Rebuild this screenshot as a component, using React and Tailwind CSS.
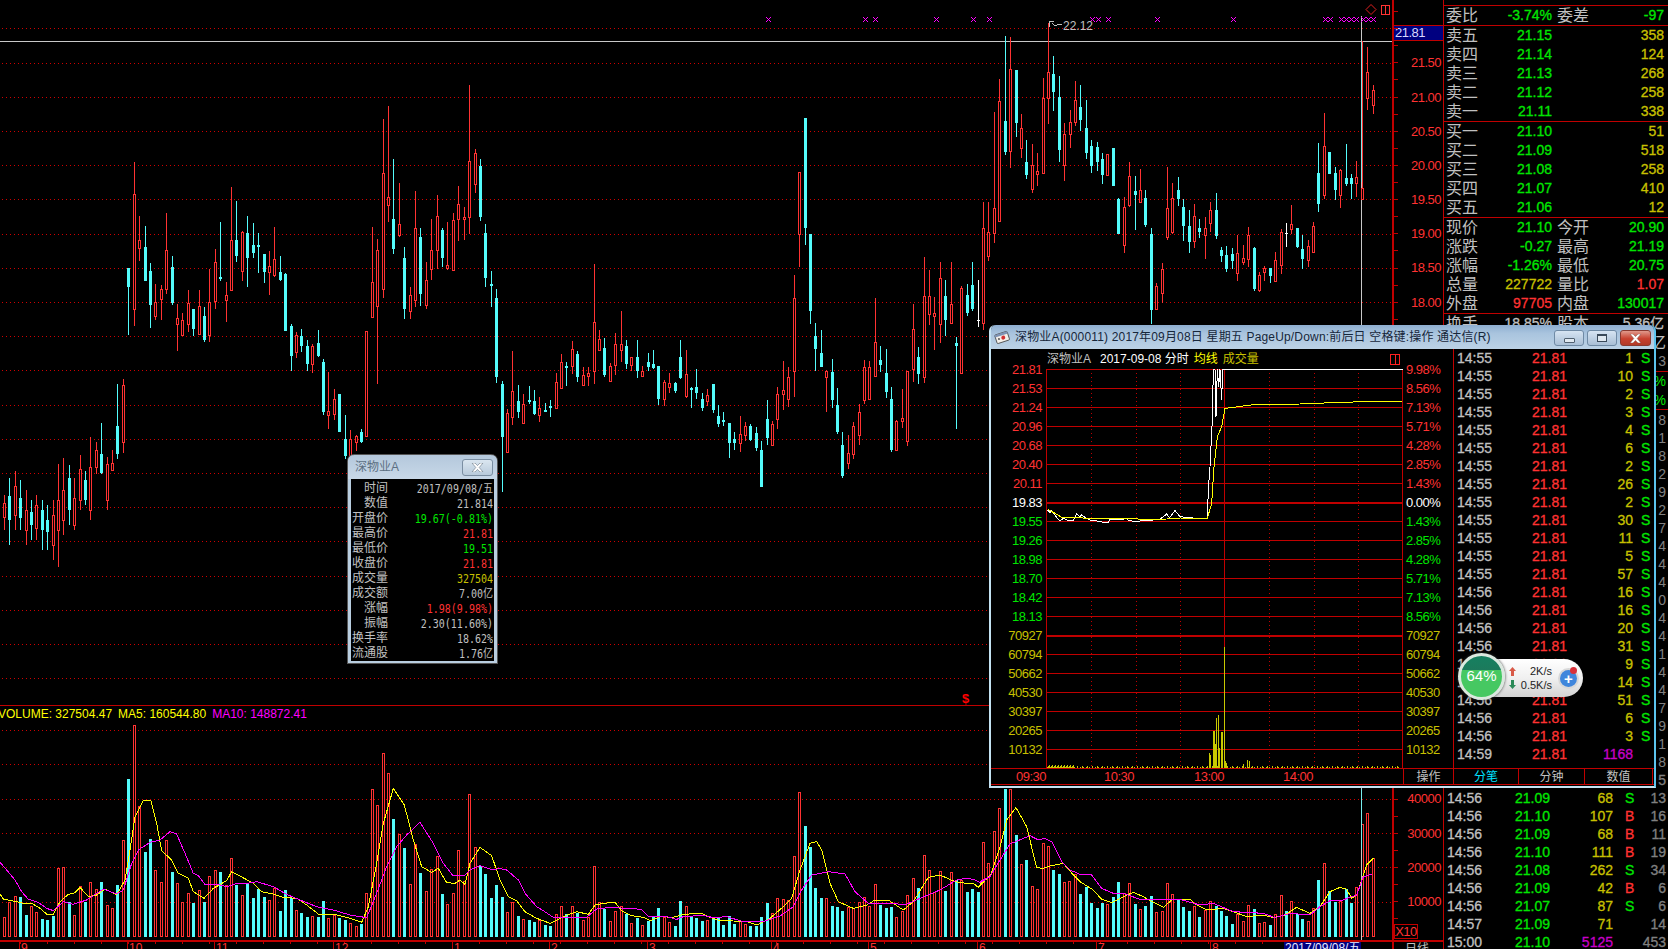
import React from "react";

const RED = "#ff3232", CY = "#54fcfc";

const parseC = (s, x0, y0) =>
  s.trim().split(";").filter((r) => r.trim()).map((r) => {
    const [x, t, a, b, c, d] = r.trim().split(/\s+/);
    const Y = (v) => Math.round(+v / 3 + y0);
    return { x: Math.floor(+x / 3 + x0), t, hi: Y(a), top: Y(b), bot: Y(c), lo: Y(d) };
  });

const leftHand = parseC(`
12 r 1305 1329 1371 1410;27 c 1254 1308 1380 1455;46 r 1233 1278 1365 1410;60 c 1260 1314 1374 1410;78 r 1290 1350 1410 1455;93 c 1320 1356 1395 1440;108 r 1305 1335 1404 1440;126 c 1320 1350 1410 1470;141 c 1335 1380 1416 1470;159 r 1320 1365 1455 1500;175 r 1212 1320 1410 1521;190 r 1194 1290 1380 1425;207 c 1215 1254 1350 1395;222 r 1254 1314 1395 1410;241 r 1185 1228 1320 1350;256 c 1233 1260 1320 1335;271 r 1132 1222 1350 1380;289 r 1146 1170 1220 1242;304 c 1090 1182 1240 1242;322 r 1192 1212 1320 1350;337 r 1170 1210 1230 1233;352 c 972 1098 1182 1196;370 r 958 976 1145 1178`, 0, 60);

const segA = parseC(`
385 c 625 625 680 825;403 r 307 403 748 797;418 r 468 541 563 602;436 c 498 562 662 662;451 c 610 634 735 803;466 r 672 725 767 780;484 r 675 688 716 780;499 r 460 571 688 702;517 c 588 622 728 735;532 r 732 775 793 873;547 r 760 781 826 826;565 r 690 730 793 816;580 c 748 748 806 828;598 r 690 739 823 823;613 c 742 769 840 846;628 r 628 727 826 846;646 r 568 607 724 747;661 c 487 652 657 662;679 r 667 706 721 786;694 r 381 541 691 691;709 c 424 541 587 606;727 r 514 517 634 663;742 c 468 519 594 681;760 c 490 556 578 594;775 c 520 556 561 639;793 c 583 583 636 669;808 r 574 619 637 705;823 r 502 598 644 651;841 c 588 637 660 663;856 c 640 642 812 812;874 c 793 798 887 933;889 r 817 826 877 893;904 c 808 828 857 876;922 c 840 858 911 933;937 r 853 858 913 938;955 c 811 850 888 891;970 c 897 907 1055 1064;985 r 936 1052 1066 1106;1003 r 988 1016 1063 1079;1018 c 1002 1002 1115 1115;1036 c 1066 1138 1188 1196;1051 r 1110 1138 1185 1195;1069 r 1126 1127 1147 1173;1084 c 1107 1117 1145 1148;1099 r 814 814 1127 1127;1117 r 502 667 771 773;1132 r 538 569 737 971;1150 r 178 340 688 714;1165 r 138 412 436 486;1180 c 298 478 566 582;1198 r 370 493 524 531;1213 c 562 595 746 777;1231 r 682 706 754 777;1246 r 394 505 721 741;1261 c 505 532 701 738;1279 r 607 661 736 747;1294 r 478 571 628 660;1312 r 406 469 571 628;1327 c 505 511 593 622;1342 r 487 616 623 630;1360 r 460 481 631 632;1375 r 379 433 478 543;1393 r 442 472 478 540;1408 r 75 304 472 522;1426 r 267 280 373 399;1441 c 298 319 472 483;1456 c 492 520 653 681;1474 c 634 673 675 741;1489 c 687 714 950 969`, 0, 60);

const segB = parseC(`
7 c 964 972 1130 1295;22 r 1048 1060 1177 1177;37 r 873 994 1072 1095;55 c 976 1023 1055 1074;70 r 1003 1033 1088 1091;88 c 978 1020 1023 1031;103 c 990 1023 1062 1065;118 r 1011 1045 1064 1086;136 c 1030 1050 1053 1055;151 c 1020 1038 1043 1071;169 r 940 967 1045 1047;184 r 882 907 983 986;199 c 906 918 921 978;217 r 843 868 917 941;232 c 874 882 950 966;250 r 922 946 974 977;265 r 922 940 949 978;283 r 612 787 934 972;298 r 810 838 870 873;313 c 835 864 944 951;331 r 910 919 964 966;346 r 820 853 914 944;364 r 753 853 871 906;379 c 840 858 911 927;394 r 892 892 914 932;412 c 840 891 932 954;427 r 918 934 949 951;445 c 880 906 920 933;460 c 870 912 924 927;475 c 918 918 1016 1035;493 r 960 966 1018 1037;508 r 938 970 980 999;526 c 965 968 992 999;541 c 840 891 954 957;559 r 870 943 1007 1014;574 c 980 984 988 1044;589 c 927 981 998 1017;607 c 999 1017 1044 1053;622 r 987 1006 1024 1039;640 c 972 972 1049 1059;655 c 1035 1068 1091 1101;670 c 1056 1079 1082 1098;688 c 1089 1089 1148 1194;703 c 1116 1137 1148 1170;721 r 1068 1123 1150 1175;736 r 1087 1099 1124 1143;751 c 1092 1098 1140 1143;769 c 1101 1120 1163 1173;784 c 1143 1171 1280 1280;802 c 1020 1078 1133 1155;817 r 1083 1093 1156 1157;832 r 981 1003 1078 1106;850 r 904 991 1001 1050;865 r 921 952 1016 1041;883 r 646 715 934 1011;898 r 337 337 521 621;916 c 174 174 503 555;931 c 522 522 752 792;946 c 790 828 866 933;964 c 811 880 920 920;979 r 930 933 952 1056;997 c 897 937 1019 1044;1012 c 984 1036 1116 1122;1027 c 1117 1156 1248 1254;1045 r 1125 1180 1210 1227;1060 r 1087 1099 1181 1197;1078 r 1032 1057 1124 1156;1093 r 900 922 1019 1032;1108 r 904 922 1016 1018;1126 r 714 847 947 950;1141 c 858 900 915 936;1159 c 867 940 995 1014;1174 c 981 1018 1170 1176;1189 r 1080 1083 1171 1172;1207 r 987 1075 1084 1104;1222 r 934 934 1144 1158;1240 r 732 808 926 966;1255 c 862 891 941 972;1273 r 591 709 952 969;1288 r 630 709 761 795;1303 r 711 760 769 870;1321 r 606 655 793 849;1336 c 660 709 780 828;1354 r 606 732 788 791;1369 c 832 850 857 1107;1384 r 678 685 940 940;1402 c 672 706 759 768;1417 c 606 676 747 753;1435 w 660 780 783 800`, 500, 60);

const segC = parseC(`
70 r 607 685 970 990;85 r 607 697 767 782;103 r 336 625 698 730;118 r 237 304 664 664;136 c 108 364 456 465;151 r 111 207 452 503;169 c 210 210 369 410;184 r 342 385 443 474;199 c 420 487 525 537;217 r 433 496 566 579;232 r 460 514 521 558;250 r 234 294 518 518;265 r 70 217 295 372;280 c 168 222 276 333;298 c 229 292 450 486;313 r 369 403 494 543;331 r 330 365 403 444;346 r 243 301 365 378;361 c 255 322 360 393;379 c 300 385 459 477;394 c 420 439 497 519;412 c 426 440 486 513;427 c 460 477 525 551;442 r 463 463 526 526;460 c 444 444 557 557;475 c 595 597 701 702;493 r 591 622 736 759;508 r 487 529 614 620;526 c 529 574 584 690;541 r 508 571 605 606;556 c 571 595 676 681;574 c 685 702 930 972;589 r 850 858 926 927;607 r 790 808 880 910;622 r 502 625 711 720;637 r 550 595 697 702;655 c 532 570 597 618;670 c 598 622 677 723;688 c 630 679 726 759;703 r 613 649 722 744;718 c 658 685 696 714;736 r 652 685 704 777;751 r 607 631 668 696;769 c 579 631 708 717;784 c 742 750 767 786;799 c 738 765 808 816;817 c 745 762 782 807;832 r 705 760 818 843;850 r 736 775 787 795;865 r 682 705 776 801;883 c 741 744 867 873;898 r 816 826 870 876;913 r 799 805 815 843;931 c 805 805 828 849;946 r 756 781 842 842;964 r 688 697 794 822;979 w 670 700 742 742;994 r 616 673 687 702;1012 c 684 685 742 744;1027 c 705 747 776 807;1045 r 721 739 779 801;1060 r 667 679 755 756;1075 c 430 520 612 636;1093 r 340 439 586 597;1108 c 457 457 522 522;1126 c 502 519 570 600;1141 r 508 511 585 624;1159 c 432 534 553 558;1174 c 522 534 552 597;1189 r 484 532 549 592;1207 r 124 565 597 597;1222 r 142 217 294 330;1240 r 255 271 315 342`, 960, 0);

const candles = [...leftHand, ...segA, ...segB, ...segC];

const parseV = (s, x0, y0) =>
  s.trim().split(/\s+/).map((v) => {
    const m = v.match(/(\d+)([rc])(\d+)/);
    return { x: Math.floor(+m[1] / 3 + x0), t: m[2], top: Math.round(+m[3] / 3 + y0) };
  });

const vols = [
  ...parseV(`13r682 28r636 46r618 61c621 79c675 94r648 109r666 127c687 142c690 160c678 175r535 190r532 208c636 223r675 241r588 256c636 271r576 289r597 304c576 322r645 337r654 352c585 370r450 385c267 403r105 418r348 436c486 451c447 466r540 484r576 499r450 517c546 532r579 547r636 565r609 580c639 598r600 613c636 628r558 646r540 661c546 679r585 694r504 709c585 727r615 742c582 760c624 775c597 793c621 808r630 823r594 841c663 856c600 874c624 889r660 904c669 922c681 937r678 955c681 970c633 985r684 1003r675 1018c684 1036c690 1051r699 1069r708 1084c702 1099r609 1117r297 1132r345 1150r189 1165r249 1180c387 1198r432 1213c474 1231r582 1246r462 1261c549 1279r603 1294r537 1312r498 1327c612 1342r642 1360r609 1375r480 1393r573 1408r312 1426r471 1441c528 1456c552 1474c624 1489c585`, 0, 690),
  ...parseV(`7c621 22r666 37r636 55c678 70r687 88c690 103c696 118r690 136c705 151c708 169r672 184r648 199c672 217r648 232c669 250r690 265r681 283r528 298r636 313c657 331r693 346r663 364r648 379c672 394r699 412c684 427r705 445c693 460c678 475c654 493r681 508r696 526c708 541c633 559r648 574c681 589c684 607c693 622r690 640c687 655c684 670c705 688c678 703c702 721r693 736r702 751c708 769c708 784c681 802c639 817r669 832r624 850r627 865r630 883r498 898r306 916c408 931c471 946c594 964c624 979r624 997c648 1012c651 1027c663 1045r651 1060r654 1078r636 1093r621 1108r648 1126r582 1141c645 1159c654 1174c651 1189r681 1207r663 1222r615 1240r564 1255c594 1273r495 1288r540 1303r606 1321r543 1336c603 1354r546 1369c570 1384r570 1402c606 1417c597 1435c606`, 500, 690),
  ...parseV(`10r667 25r730 43r634 58r565 76c507 91r507 109c645 124r733 139c720 157r799 172r808 190r670 205r679 220c749 238c763 253r787 268r784 286r763 301c822 319c802 334c850 352c864 367c850 382r853 400c832 415c787 433r820 448r790 466c852 481r867 496c858 514c828 529r876 547r874 562r790 577r823 595c841 610c861 628c873 643r858 658c891 676r871 691r844 709c858 724c873 739c888 757c912 772r882 790r903 805r856 823c867 838r909 853r906 871c915 886r882 904r826 919c873 934r844 952c882 967c897 985r903 1000r865 1015c780 1033r730 1048c813 1066c846 1081r843 1099c808 1114c849 1129r801 1147r612 1162r580 1180r715`, 980, 620),
];

const pts = (arr, x0, y0) => arr.map(([x, y]) => `${x / 3 + x0},${y / 3 + y0}`).join(" ");

const yl1 = [[0,612],[10,627],[40,633],[70,640],[95,640],[120,655],[140,672],[160,672],[180,635],[205,613],[225,608],[240,592],[265,620],[290,615],[315,597],[350,615],[375,570],[390,480],[405,380],[430,330],[452,330],[470,400],[485,482],[515,510],[535,550],[565,565],[580,605],[612,625],[640,595],[680,572],[695,545],[720,558],[760,580],[785,605],[820,612],[850,622],[890,625],[920,645],[955,672],[1000,672],[1050,685],[1085,697],[1105,650],[1130,520],[1150,400],[1180,295],[1213,345],[1240,450],[1265,530],[1295,547],[1315,535],[1340,578],[1365,580],[1380,570],[1395,583],[1410,520],[1440,472],[1475,497],[1500,570]];
const mg1 = [[0,517],[20,540],[45,570],[65,605],[85,628],[115,637],[140,655],[160,662],[190,635],[220,643],[260,630],[310,597],[350,612],[370,600],[395,520],[415,480],[450,457],[480,450],[510,425],[530,432],[555,490],[580,550],[595,557],[615,583],[650,583],[680,590],[710,580],[740,580],[770,575],[820,590],[860,613],[900,630],[950,650],[1000,660],[1050,675],[1100,683],[1130,610],[1160,530],[1190,470],[1220,435],[1260,397],[1300,460],[1330,520],[1360,558],[1395,555],[1410,540],[1440,527],[1480,540],[1500,535]];
const yl2 = [[0,570],[25,620],[50,632],[75,665],[110,685],[150,700],[170,690],[200,675],[230,665],[265,673],[285,645],[310,640],[345,637],[365,662],[395,677],[430,682],[450,692],[480,680],[520,682],[550,673],[605,670],[625,680],[660,692],[700,693],[740,695],[770,705],[810,685],[850,650],[875,625],[900,540],[930,460],[950,455],[965,480],[990,580],[1015,635],[1060,655],[1100,645],[1125,630],[1165,630],[1210,660],[1240,635],[1285,562],[1320,555],[1365,575],[1400,580],[1420,580],[1435,592],[1470,555]];
const mg2 = [[0,536],[20,540],[55,570],[75,610],[110,650],[130,662],[160,682],[260,682],[290,657],[330,652],[380,655],[425,658],[445,680],[500,680],[530,688],[550,680],[610,676],[640,683],[680,680],[730,695],[790,695],[840,678],[880,650],[905,600],[935,555],[985,545],[1035,552],[1065,605],[1105,640],[1180,640],[1215,645],[1260,625],[1320,600],[1370,570],[1395,565],[1420,568],[1440,578],[1470,560]];
const yl3 = [[0,790],[30,770],[60,680],[80,600],[108,563],[140,620],[170,743],[190,745],[210,738],[250,730],[280,765],[300,785],[340,810],[365,838],[395,848],[430,830],[460,817],[490,830],[510,842],[550,862],[575,840],[630,838],[650,855],[680,870],[730,865],[760,875],[800,890],[850,885],[880,893],[915,885],[950,862],[990,880],[1020,860],[1050,815],[1080,802],[1100,808],[1115,835],[1130,825],[1160,735],[1180,715]];
const mg3 = [[0,785],[30,770],[60,720],[90,672],[150,647],[175,660],[195,655],[215,665],[245,725],[270,750],[300,763],[335,765],[365,805],[400,820],[430,820],[480,838],[600,838],[660,855],[700,850],[760,875],[850,880],[885,893],[930,880],[990,885],[1020,860],[1050,842],[1080,843],[1130,825],[1150,770],[1175,763]];

const marks = [768, 865, 875, 936, 973, 989, 1092, 1098, 1108, 1157, 1233, 1325, 1330, 1341, 1346, 1351, 1356, 1363, 1368, 1373];

function PriceChart() {
  const ys = Array.from({ length: 20 }, (_, k) => Math.round(28.3 + 34.2 * k));
  return (
    <svg width="1392" height="705" className="block shrink-0" shapeRendering="crispEdges">
      {ys.map((y) => <line key={y} x1="2" x2="1392" y1={y + 0.5} y2={y + 0.5} stroke="#d00000" strokeDasharray="1 3" />)}
      <rect x="0" y="41" width="1392" height="1" fill="#c8c8c8" />
      <rect x="1361" y="16" width="1" height="689" fill="#c8c8c8" />
      {candles.map((c, i) => {
        const col = c.t === "r" ? RED : c.t === "c" ? CY : "#ffffff";
        return (
          <g key={i}>
            <rect x={c.x} y={c.hi} width="1" height={Math.max(1, c.lo - c.hi)} fill={col} />
            {c.t === "c" && <rect x={c.x - 1} y={c.top} width="3" height={Math.max(2, c.bot - c.top)} fill={col} />}
            {c.t === "r" && <rect x={c.x - 0.5} y={c.top + 0.5} width="2" height={Math.max(2, c.bot - c.top)} fill="#000" stroke={col} />}
            {c.t === "w" && <rect x={c.x - 1} y={c.top} width="3" height="1" fill={col} />}
          </g>
        );
      })}
      <rect x="1361" y="42" width="1" height="140" fill={CY} opacity="0.6" />
      {marks.map((x) => (
        <path key={x} d={`M${x - 2} 17h1v1h1v1h1v-1h1v-1h1v1h-1v1h-1v1h1v1h1v1h-1v-1h-1v-1h-1v1h-1v1h-1v-1h1v-1h1v-1h-1v-1h-1z`} fill="#ff00ff" />
      ))}
      <path d="M1049 21h5M1049 21v6M1052 23l2 2h3l2 -1h3" stroke="#c0c0c0" fill="none" />
      <text x="1063" y="30" fill="#c0c0c0" fontSize="12">22.12</text>
      <path d="M1371 4.5l5 5l-5 5l-5-5z" stroke="#e02020" fill="none" shapeRendering="auto" />
      <rect x="1381.5" y="5.5" width="8" height="9" stroke={RED} fill="none" />
      <rect x="1385" y="5" width="1" height="10" fill={RED} />
      <text x="962" y="703" fill="#ff0000" fontSize="13" fontWeight="700">$</text>
    </svg>
  );
}

function VolChart() {
  const ys = [730, 764, 799, 833, 867, 902];
  const Y = (v) => v - 706;
  return (
    <svg width="1392" height="234" className="block shrink-0" shapeRendering="crispEdges">
      {ys.map((y) => <line key={y} x1="2" x2="1392" y1={Y(y) + 0.5} y2={Y(y) + 0.5} stroke="#d00000" strokeDasharray="1 3" />)}
      {vols.map((b, i) => {
        const top = Y(b.top);
        const h = 231 - top;
        return b.t === "c"
          ? <rect key={i} x={b.x - 1} y={top} width="3" height={h} fill={CY} />
          : <rect key={i} x={b.x - 0.5} y={top + 0.5} width="2" height={h - 1} fill="#000" stroke={RED} />;
      })}
      <rect x="1361" y="0" width="1" height="234" fill="#c8c8c8" />
      <rect x="1361" y="83" width="1" height="60" fill={CY} opacity="0.7" />
      <polyline points={pts(yl1, 0, 690 - 706)} fill="none" stroke="#ffff00" />
      <polyline points={pts(yl2, 500, 690 - 706)} fill="none" stroke="#ffff00" />
      <polyline points={pts(yl3, 980, 620 - 706)} fill="none" stroke="#ffff00" />
      <polyline points={pts(mg1, 0, 690 - 706)} fill="none" stroke="#ff00ff" />
      <polyline points={pts(mg2, 500, 690 - 706)} fill="none" stroke="#ff00ff" />
      <polyline points={pts(mg3, 980, 620 - 706)} fill="none" stroke="#ff00ff" />
    </svg>
  );
}

function DateStrip() {
  const months = [[21, "9"], [129, "10"], [216, "11"], [335, "12"], [454, "1"], [551, "2"], [649, "3"], [773, "4"], [870, "5"], [979, "6"], [1098, "7"], [1212, "8"]];
  return (
    <svg width="1392" height="7" className="block shrink-0" shapeRendering="crispEdges">
      {Array.from({ length: 50 }, (_, i) => <rect key={i} x={i * 27 + 20} y="0" width="1" height="2" fill="#c00000" />)}
      {months.map(([x, t]) => (
        <g key={t}>
          <rect x={x - 2} y="0" width="1" height="7" fill="#c00000" />
          <text x={x} y="10" fill={RED} fontSize="12">{t}</text>
        </g>
      ))}
      <rect x="1284" y="0" width="77" height="7" fill="#000080" />
      <text x="1285" y="10" fill="#e8e8ff" fontSize="12">2017/09/08/五</text>
    </svg>
  );
}

const Row = ({ l, v, l2, v2, c, c2 }) => (
  <div className="grid h-[19px] grid-cols-[32px_74px_5px_32px_75px] pl-[2px] leading-[19px]">
    <span className="text-[16px] text-[#c0c0c0]">{l}</span>
    <span className={`text-right text-[14px] [-webkit-text-stroke:0.3px] ${c}`}>{v}</span>
    <span />
    <span className="text-[16px] text-[#c0c0c0]">{l2}</span>
    <span className={`text-right text-[14px] [-webkit-text-stroke:0.3px] ${c2}`}>{v2}</span>
  </div>
);

const G = "text-[#00e600]", Rr = "text-[#ff3232]", Yl = "text-[#c8c000]", Gy = "text-[#c0c0c0]";

const hiddenDigits = ["8", "1", "8", "2", "9", "2", "7", "4", "4", "4", "0", "4", "4", "1", "4", "4", "7", "9", "1", "8"];

const tickRows = [
  ["14:56","21.09","242","S","5"],
  ["14:56","21.09","68","S","13"],["14:56","21.10","107","B","16"],["14:56","21.09","68","B","11"],["14:56","21.10","111","B","19"],["14:56","21.08","262","S","34"],["14:56","21.09","42","B","6"],["14:56","21.07","87","S","6"],["14:57","21.09","71","","14"],["15:00","21.10","5125","","453"],
];

function TickRow({ r }) {
  const last = r[0] === "15:00";
  return (
    <div className="flex h-[18px] items-center pl-[3px] text-[14px] leading-[18px] [-webkit-text-stroke:0.3px]">
      <span className="w-[68px] text-[#c0c0c0]">{r[0]}</span>
      <span className="w-[44px] text-[#00e600]">{r[1]}</span>
      <span className={`w-[54px] text-right ${last ? "text-[#c800c8]" : "text-[#c8c000]"}`}>{r[2]}</span>
      <span className={`ml-[12px] w-[12px] ${r[3] === "B" ? "text-[#ff3232]" : "text-[#00e600]"}`}>{r[3]}</span>
      <span className="flex-1 pr-[2px] text-right text-[#808080]">{r[4]}</span>
    </div>
  );
}

const EdgeChar = ({ t, cls = "text-[#c0c0c0]", h = "h-[19px]", size = "text-[14px]" }) => (
  <div className={`flex ${h} items-center justify-end pr-[2px] ${size} ${cls}`}>{t}</div>
);

function RightPanel() {
  return (
    <div className="flex h-full w-[225px] shrink-0 flex-col overflow-hidden border-l border-[#c00000] pt-[5px]">
      <div className="border-t border-[#c00000]">
        <Row l="委比" v="-3.74%" c={G} l2="委差" v2="-97" c2={G} />
      </div>
      <div className="h-[97px] border-t border-[#c00000]">
        {[["卖五","21.15","358"],["卖四","21.14","124"],["卖三","21.13","268"],["卖二","21.12","258"],["卖一","21.11","338"]].map((r) => (
          <Row key={r[0]} l={r[0]} v={r[1]} c={G} v2={r[2]} c2={Yl} />
        ))}
      </div>
      <div className="h-[97px] border-t border-[#c00000]">
        {[["买一","21.10","51"],["买二","21.09","518"],["买三","21.08","258"],["买四","21.07","410"],["买五","21.06","12"]].map((r) => (
          <Row key={r[0]} l={r[0]} v={r[1]} c={G} v2={r[2]} c2={Yl} />
        ))}
      </div>
      <div className="h-[97px] border-t border-[#c00000]">
        <Row l="现价" v="21.10" c={G} l2="今开" v2="20.90" c2={G} />
        <Row l="涨跌" v="-0.27" c={G} l2="最高" v2="21.19" c2={G} />
        <Row l="涨幅" v="-1.26%" c={G} l2="最低" v2="20.75" c2={G} />
        <Row l="总量" v="227722" c={Yl} l2="量比" v2="1.07" c2={Rr} />
        <Row l="外盘" v="97705" c={Rr} l2="内盘" v2="130017" c2={G} />
      </div>
      <div className="h-[61px] border-t border-[#c00000]">
        <Row l="换手" v="18.85%" c={Gy} l2="股本" v2="5.36亿" c2={Gy} />
        <EdgeChar t="亿" size="text-[16px]" />
        <EdgeChar t="3" cls="text-[#808080]" />
      </div>
      <div className="h-[38px] border-t border-[#c00000]">
        <EdgeChar t="%" cls="text-[#00e600]" />
        <EdgeChar t="%" cls="text-[#00e600]" />
      </div>
      <div className="border-t border-[#c00000] pt-[1px]">
        {hiddenDigits.map((d, i) => <EdgeChar key={i} t={d} cls="text-[#808080]" h="h-[18px]" />)}
        {tickRows.map((r, i) => <TickRow key={i} r={r} />)}
      </div>
    </div>
  );
}

const white = [[203,570],[210,578],[215,572],[228,590],[240,603],[250,595],[262,600],[278,603],[290,582],[300,590],[305,585],[315,592],[330,600],[350,603],[370,607],[385,607],[390,597],[402,600],[415,597],[425,600],[438,595],[445,600],[465,606],[480,603],[500,600],[520,600],[540,598],[560,582],[568,593],[575,585],[585,572],[600,590],[620,592],[650,595],[682,595],[685,510],[690,440],[697,300],[700,148],[705,148],[708,290],[712,148],[716,200],[720,148],[725,240],[728,148],[1268,148]];
const avg = [[203,568],[225,580],[245,592],[285,593],[330,595],[470,595],[480,600],[560,597],[600,594],[682,595],[695,550],[702,440],[712,350],[725,320],[735,265],[775,260],[820,254],[960,252],[1080,247],[1195,244],[1268,243]];
const bigVol = [[688,400],[691,406],[700,333],[703,333],[706,372],[710,295],[715,286],[718,385],[724,336],[727,336],[733,80],[737,423],[740,430],[790,432],[802,420],[807,423]];

function MiniChart() {
  const ls = Array.from({ length: 22 }, (_, k) => k);
  const vl = [45, 90, 134, 223, 268, 312];
  return (
    <svg width="357" height="399" className="block shrink-0" shapeRendering="crispEdges">
      {ls.map((k) => (
        <rect key={k} x="0" y={k === 14 ? 266 : k === 7 ? 133 : k * 19} width="357" height={k === 7 || k === 14 ? 2 : 1} fill="#c00000" />
      ))}
      {vl.map((x) => <line key={x} x1={x + 0.5} x2={x + 0.5} y1="0" y2="399" stroke="#c00000" strokeDasharray="1 3" />)}
      <rect x="0" y="0" width="1" height="399" fill="#c00000" />
      <rect x="178" y="0" width="1" height="399" fill="#c00000" />
      <rect x="356" y="0" width="1" height="399" fill="#c00000" />
      {Array.from({ length: 354 }, (_, i) => {
        const h = i < 27 ? 1 + (i * 7) % 3 : i % 5 === 0 ? 2 : i % 3 === 0 ? 1 : 0;
        return h ? <rect key={i} x={i + 1} y={399 - h} width="1" height={h} fill="#c8c800" /> : null;
      })}
      {bigVol.map(([x, y]) => {
        const X = Math.floor(x / 3 - 66), T = Math.round(y / 3 + 251);
        return <rect key={x} x={X} y={T} width="1" height={399 - T} fill="#c8c800" />;
      })}
      <polyline points={pts(white, -66, -49)} fill="none" stroke="#ffffff" />
      <polyline points={pts(avg, -66, -49)} fill="none" stroke="#ffff00" />
    </svg>
  );
}

const leftLabels = [
  ["21.81", Rr, "9.98%", Rr],["21.53", Rr, "8.56%", Rr],["21.24", Rr, "7.13%", Rr],["20.96", Rr, "5.71%", Rr],["20.68", Rr, "4.28%", Rr],["20.40", Rr, "2.85%", Rr],["20.11", Rr, "1.43%", Rr],
  ["19.83", "text-white", "0.00%", "text-white"],
  ["19.55", G, "1.43%", G],["19.26", G, "2.85%", G],["18.98", G, "4.28%", G],["18.70", G, "5.71%", G],["18.42", G, "7.13%", G],["18.13", G, "8.56%", G],
  ["70927", Yl, "70927", Yl],["60794", Yl, "60794", Yl],["50662", Yl, "50662", Yl],["40530", Yl, "40530", Yl],["30397", Yl, "30397", Yl],["20265", Yl, "20265", Yl],["10132", Yl, "10132", Yl],
];

const listRows = [
  ["14:55",1],["14:55",10],["14:55",2],["14:55",3],["14:55",4],["14:55",6],["14:55",2],["14:55",26],["14:55",2],["14:55",30],["14:55",11],["14:55",5],["14:55",57],
  ["14:56",16],["14:56",16],["14:56",20],["14:56",31],["14:56",9],["14:56",14],["14:56",51],["14:56",6],["14:56",3],["14:59",1168],
];

const BoldX = ({ w = 13, h = 9, fill = "#fff", stroke = "#7a4a40" }) => (
  <svg width={w} height={h} viewBox="0 0 13 9" className="block" shapeRendering="auto">
    <path d="M1 0h3l2.5 2.6L9 0h3L8.2 4.5 12 9H9L6.5 6.4 4 9H1l3.8-4.5z" fill={fill} stroke={stroke} strokeWidth="0.5" />
  </svg>
);

const WinBtn = ({ children, cls }) => (
  <div className={`flex h-[16px] items-center justify-center rounded-[3px] border border-[#6f8aa5] ${cls}`}>{children}</div>
);

function QuoteWindow() {
  return (
    <div className="absolute left-[989px] top-[325px] flex h-[463px] w-[667px] flex-col rounded-t-[6px] border-x-2 border-b-2 border-l-[#c4e2f2] border-r-[#5cc4ee] border-b-[#c4e2f2] bg-black">
      <div className="flex h-[24px] shrink-0 items-center rounded-t-[5px] bg-[linear-gradient(to_bottom,#8eaed0,#a9c4de_35%,#bcd2e6)] pl-[3px] text-[12px] tracking-[0.17px] text-[#16263a]">
        <svg width="16" height="14" viewBox="0 0 16 14" className="shrink-0" shapeRendering="auto">
          <g transform="rotate(-18 8 7)">
            <rect x="1.5" y="3" width="13" height="9" rx="1" fill="#f4f0ea" stroke="#444" strokeWidth="0.8" />
            <rect x="1.5" y="3" width="13" height="2.5" fill="#7d93b5" />
            <circle cx="9" cy="8" r="2" fill="#d23030" />
            <circle cx="4.5" cy="8" r="1" fill="#555" />
          </g>
        </svg>
        <span className="ml-[5px] whitespace-nowrap">深物业A(000011) 2017年09月08日 星期五 PageUp/Down:前后日 空格键:操作 通达信(R)</span>
        <div className="ml-auto flex h-full items-start gap-[3px] pr-[3px] pt-[5px]">
          <WinBtn cls="w-[30px] bg-[linear-gradient(to_bottom,#d6e4f2,#a9bfd6)]"><div className="mt-[4px] h-[5px] w-[11px] rounded-[1px] border border-[#506070] bg-[#dfe8f0]" /></WinBtn>
          <WinBtn cls="w-[30px] bg-[linear-gradient(to_bottom,#d6e4f2,#a9bfd6)]"><div className="h-[8px] w-[10px] border border-t-2 border-[#3a4a5a] bg-[#dfe8f0]" /></WinBtn>
          <WinBtn cls="w-[31px] border-[#8a3a30] bg-[linear-gradient(to_bottom,#e09a8c,#c8412f_55%,#b23a28)]"><BoldX /></WinBtn>
        </div>
      </div>
      <div className="flex min-h-0 flex-1 flex-col">
        <div className="flex h-[419px] shrink-0">
          <div className="w-[55px] shrink-0 pr-[4px] pt-[11px] text-right text-[13px] tracking-[-0.5px]">
            {leftLabels.map((r) => <div key={r[0]} className={`h-[19px] leading-[19px] ${r[1]}`}>{r[0]}</div>)}
          </div>
          <div className="w-[357px] shrink-0">
            <div className="flex h-[20px] items-center whitespace-nowrap pl-[1px] text-[12px] leading-none">
              <span className="text-[#c0c0c0]">深物业A</span>
              <span className="ml-[9px] text-white">2017-09-08 分时</span>
              <span className="ml-[5px] text-[#ffff00]">均线</span>
              <span className="ml-[5px] text-[#c8c000]">成交量</span>
              <svg width="10" height="11" className="ml-auto mr-[3px] shrink-0" shapeRendering="crispEdges">
                <rect x="0.5" y="0.5" width="9" height="10" fill="none" stroke="#ff2020" />
                <rect x="5" y="0" width="1" height="11" fill="#ff2020" />
              </svg>
            </div>
            <MiniChart />
          </div>
          <div className="w-[50px] shrink-0 pl-[3px] pt-[11px] text-[13px] tracking-[-0.5px]">
            {leftLabels.map((r) => <div key={r[0] + "r"} className={`h-[19px] leading-[19px] ${r[3]}`}>{r[2]}</div>)}
          </div>
          <div className="flex-1 border-l border-[#c00000]">
            {listRows.map((r, i) => (
              <div key={i} className="flex h-[18px] items-center pl-[3px] text-[14px] leading-[18px] [-webkit-text-stroke:0.3px]">
                <span className="w-[75px] text-[#c0c0c0]">{r[0]}</span>
                <span className="w-[44px] text-[#ff3232]">21.81</span>
                <span className={`w-[57px] text-right ${r[1] > 1000 ? "text-[#c800c8]" : "text-[#c8c000]"}`}>{r[1]}</span>
                {r[1] < 1000 && <span className="ml-[8px] text-[#00e600]">S</span>}
              </div>
            ))}
          </div>
        </div>
        <div className="flex h-[17px] shrink-0 border-y border-[#c00000] text-[13px] leading-[16px]">
          <span className="w-[55px] text-right tracking-[-0.5px] text-[#ff3232]">09:30</span>
          <span className="w-[88px] text-right tracking-[-0.5px] text-[#ff3232]">10:30</span>
          <span className="w-[90px] text-right tracking-[-0.5px] text-[#ff3232]">13:00</span>
          <span className="w-[89px] text-right tracking-[-0.5px] text-[#ff3232]">14:00</span>
          <span className="w-[90px]" />
          <span className="w-[50px] border-l border-[#c00000] text-center text-[12px] text-[#c0c0c0]">操作</span>
          <span className="w-[65px] border-l border-[#c00000] text-center text-[12px] text-[#00e0ff]">分笔</span>
          <span className="w-[66px] border-l border-[#c00000] text-center text-[12px] text-[#c0c0c0]">分钟</span>
          <span className="w-[69px] border-x border-[#c00000] text-center text-[12px] text-[#c0c0c0]">数值</span>
        </div>
      </div>
    </div>
  );
}

function InfoDialog() {
  const rows = [
    ["时间", "2017/09/08/五", Gy], ["数值", "21.814", Gy], ["开盘价", "19.67(-0.81%)", G], ["最高价", "21.81", Rr], ["最低价", "19.51", G], ["收盘价", "21.81", Rr],
    ["成交量", "327504", Yl], ["成交额", "7.00亿", Gy], ["涨幅", "1.98(9.98%)", Rr], ["振幅", "2.30(11.60%)", Gy], ["换手率", "18.62%", Gy], ["流通股", "1.76亿", Gy],
  ];
  return (
    <div className="absolute left-[348px] top-[455px] flex h-[208px] w-[149px] flex-col rounded-t-[6px] border-x-[3px] border-b-[2px] border-[#b9cee0] bg-black shadow-[0_0_0_1px_#555]">
      <div className="-mx-[3px] flex h-[24px] shrink-0 items-center justify-between rounded-t-[6px] bg-[linear-gradient(to_bottom,#b4c8dc,#c8d8e8)] pl-[7px] pr-[4px] text-[12px] text-[#5c6f82]">
        <span>深物业A</span>
        <div className="flex h-[17px] w-[31px] items-center justify-center rounded-[3px] border border-[#7a8ea2] bg-[linear-gradient(to_bottom,#dae6f0,#b8cadb)]"><BoldX stroke="#50606f" /></div>
      </div>
      <div className="pt-[2px] text-[12px]">
        {rows.map((r) => (
          <div key={r[0]} className="flex h-[15px] items-center justify-between pr-[1px] leading-[15px]">
            <span className="w-[37px] text-right text-[12px] text-[#c0c0c0]">{r[0]}</span>
            <span className={`inline-block origin-center scale-y-[1.2] whitespace-nowrap font-['DejaVu_Sans_Mono','Noto_Sans_CJK_SC',monospace] text-[10px] ${r[2]}`}>{r[1]}</span>
          </div>
        ))}
      </div>
    </div>
  );
}

function NetWidget() {
  return (
    <div className="absolute left-[1458px] top-[653px] h-[47px] w-[130px]">
      <div className="absolute left-[20px] top-[6px] flex h-[38px] w-[105px] items-center rounded-r-full bg-[linear-gradient(to_bottom,#ffffff,#f0f0f0_50%,#d4d4d4)] pl-[31px] text-[11px] leading-[14px] text-[#222]">
        <svg width="7" height="24" viewBox="0 0 7 24" className="shrink-0" shapeRendering="auto">
          <path d="M3.5 1L7 5H5v5H2V5H0z" fill="#d85a48" />
          <path d="M3.5 23L7 19H5v-5H2v5H0z" fill="#2c8a58" />
        </svg>
        <div className="ml-auto mr-[31px] text-right">
          <div>2K/s</div>
          <div>0.5K/s</div>
        </div>
      </div>
      <div className="absolute left-0 top-0 flex h-[47px] w-[47px] items-center justify-center rounded-full border-[3px] border-[#dbe8df] bg-[linear-gradient(to_bottom,#158060_0%,#1c7a5c_33%,#46c862_33%,#46c862_100%)] text-[15px] text-white shadow-[0_0_3px_#333]">64%</div>
      <div className="absolute left-[102px] top-[17px] flex h-[17px] w-[17px] items-center justify-center rounded-full bg-[#3f86dc] text-[15px] font-bold leading-none text-white shadow-[0_0_0_2px_#d8d8d8]">+</div>
      <div className="absolute left-[112px] top-[14px] h-[7px] w-[7px] rounded-full bg-[#d8303a]" />
    </div>
  );
}

export default function App() {
  const ticksTop = Array.from({ length: 42 }, (_, i) => 11 + 17.1 * i);
  const ticksVol = Array.from({ length: 14 }, (_, i) => 7 + 17.1 * i);
  return (
    <div className="relative flex h-[949px] w-[1668px] overflow-hidden bg-black font-['Liberation_Sans','Noto_Sans_CJK_SC',sans-serif]">
      <div className="flex h-full w-[1443px] shrink-0 flex-col">
        <div className="flex h-[705px] shrink-0">
          <PriceChart />
          <div className="relative w-[51px] shrink-0 border-l-2 border-[#c00000] pt-[25px] text-[13px] tracking-[-0.5px] text-[#ff3232]">
            <svg width="4" height="705" className="absolute left-0 top-0" shapeRendering="crispEdges">
              {ticksTop.map((y) => <rect key={y} x="0" y={Math.round(y)} width="4" height="1" fill="#c00000" />)}
            </svg>
            <div className="h-[16px] border-y border-[#c00000] bg-[#000080] pl-[1px] leading-[14px] text-[#d8d8ff]">21.81</div>
            <div className="mt-[5px]">
              {["21.50", "21.00", "20.50", "20.00", "19.50", "19.00", "18.50", "18.00"].map((t) => (
                <div key={t} className="flex h-[34.2px] items-center justify-end pr-[2px]">{t}</div>
              ))}
            </div>
          </div>
        </div>
        <div className="flex h-[235px] shrink-0 border-t border-[#c00000]">
          <div className="relative">
            <VolChart />
            <div className="absolute left-[-2px] top-0 flex gap-[6px] whitespace-nowrap text-[12px] leading-[16px] text-[#ffff00]">
              <span>VOLUME: 327504.47</span>
              <span>MA5: 160544.80</span>
              <span className="text-[#ff00ff]">MA10: 148872.41</span>
            </div>
          </div>
          <div className="relative w-[51px] shrink-0 border-l-2 border-[#c00000] pt-[76px] text-[13px] tracking-[-0.5px] text-[#ff3232]">
            <svg width="4" height="234" className="absolute left-0 top-0" shapeRendering="crispEdges">
              {ticksVol.map((y) => <rect key={y} x="0" y={Math.round(y)} width="4" height="1" fill="#c00000" />)}
            </svg>
            {["40000", "30000", "20000", "10000"].map((t) => (
              <div key={t} className="flex h-[34.2px] items-center justify-end pr-[2px]">{t}</div>
            ))}
            <div className="mt-[5px] h-[15px] w-[24px] border border-[#c00000] text-center leading-[13px]">X10</div>
          </div>
        </div>
        <div className="flex h-[9px] shrink-0 overflow-hidden border-t-2 border-[#c00000]">
          <DateStrip />
          <div className="w-[51px] border-l-2 border-[#c00000] pl-[11px] text-[12px] leading-[14px] text-[#c0c0c0]">日线</div>
        </div>
      </div>
      <RightPanel />
      <InfoDialog />
      <QuoteWindow />
      <NetWidget />
    </div>
  );
}
